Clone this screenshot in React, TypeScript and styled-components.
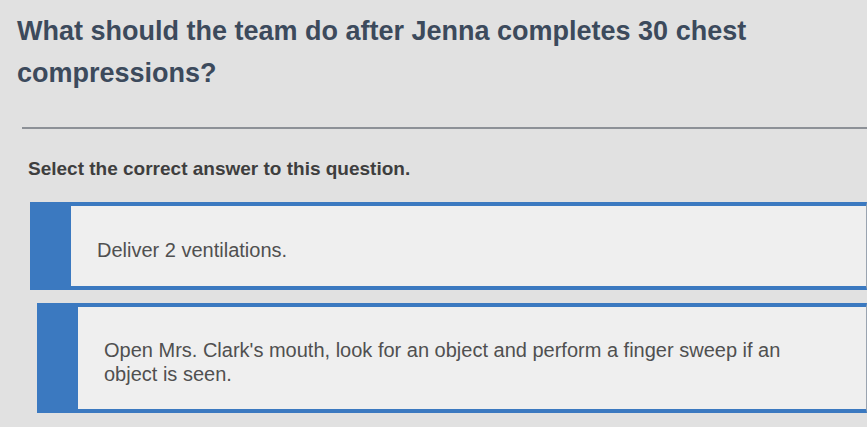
import styled, { createGlobalStyle } from 'styled-components';

const GlobalStyle = createGlobalStyle`
  html, body {
    margin: 0;
    padding: 0;
    background: #e1e1e1;
  }
  body {
    font-family: "Liberation Sans", Arial, sans-serif;
  }
`;

const answers = [
  { id: 'a', text: 'Deliver 2 ventilations.', indent: 30, height: 88 },
  {
    id: 'b',
    text: "Open Mrs. Clark's mouth, look for an object and perform a finger sweep if an object is seen.",
    indent: 37,
    height: 110,
  },
];

export default function App() {
  return (
    <>
      <GlobalStyle />
      <Page>
        <Question>What should the team do after Jenna completes 30 chest compressions?</Question>
        <Divider />
        <Prompt>Select the correct answer to this question.</Prompt>
        <Answers>
          {answers.map(({ id, text, indent, height }) => (
            <Answer key={id} $indent={indent} $height={height}>
              <Marker />
              <AnswerBody>
                <AnswerText>{text}</AnswerText>
              </AnswerBody>
            </Answer>
          ))}
        </Answers>
      </Page>
    </>
  );
}

const Page = styled.div`
  width: 867px;
  height: 427px;
  overflow: hidden;
  padding-top: 10px;
  box-sizing: border-box;
`;

const Question = styled.h1`
  margin: 0 0 0 17px;
  max-width: 770px;
  font-size: 27px;
  line-height: 42px;
  font-weight: bold;
  color: #3c4a5c;
`;

const Divider = styled.hr`
  margin: 33px 0 0 22px;
  border: none;
  height: 2px;
  background: #8d9197;
`;

const Prompt = styled.p`
  margin: 28px 0 0 28px;
  font-size: 19px;
  line-height: 24px;
  font-weight: bold;
  color: #3e3e3e;
`;

const Answers = styled.div`
  display: flex;
  flex-direction: column;
  gap: 13px;
  margin-top: 21px;
`;

const Answer = styled.div<{ $indent: number; $height: number }>`
  display: flex;
  margin-left: ${(p) => p.$indent}px;
  height: ${(p) => p.$height}px;
  border-top: 4px solid #3b79c0;
  border-bottom: 4px solid #3b79c0;
  border-right: 1px solid #9aa4b0;
  box-sizing: border-box;
`;

const Marker = styled.div`
  width: 41px;
  flex-shrink: 0;
  background: #3b79c0;
`;

const AnswerBody = styled.div`
  flex: 1;
  display: flex;
  align-items: center;
  padding: 8px 0 0 26px;
  background: #efefef;
`;

const AnswerText = styled.span`
  max-width: 700px;
  font-size: 20px;
  line-height: 24px;
  color: #505050;
`;
